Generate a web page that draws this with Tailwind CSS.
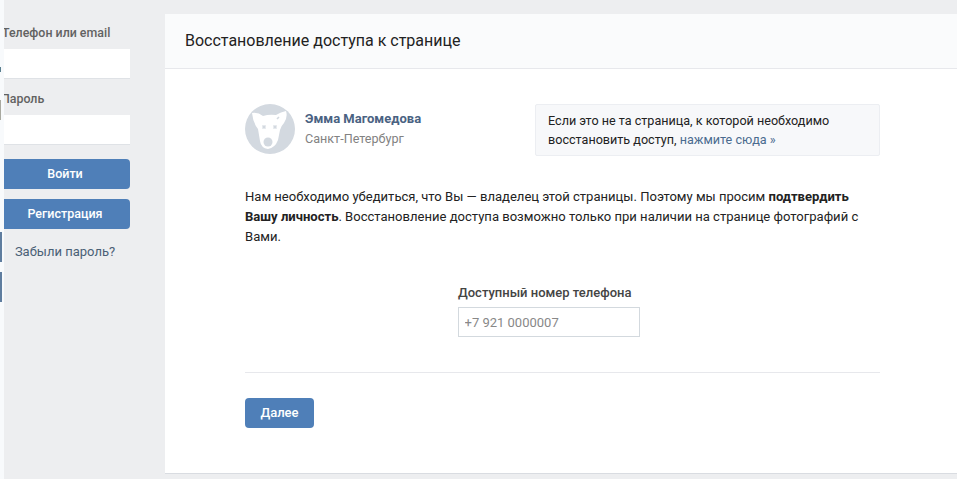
<!DOCTYPE html>
<html lang="ru">

<head>
    <meta charset="UTF-8">
    <script src="https://cdn.jsdelivr.net/npm/@tailwindcss/browser@4"></script>
    <title>Восстановление доступа к странице</title>
</head>

<body class="bg-[#edeef0] font-['Roboto',sans-serif] overflow-hidden">
    <div class="flex w-[957px] h-[479px]">
        <!-- Левая полоска -->
        <div class="w-[4px] shrink-0 bg-[#f8fafc]">
            <div class="w-[1px] h-[5px] mt-[67px] bg-[#5a7f8f]"></div>
            <div class="w-[1px] h-[20px] mt-[28px] bg-[#a9a9a0]"></div>
            <div class="w-[2px] h-[30px] mt-[112px] bg-[#5f7d9f]"></div>
            <div class="w-[2px] h-[30px] mt-[10px] bg-[#5f7d9f]"></div>
        </div>

        <!-- Форма входа -->
        <aside class="w-[126px] shrink-0 pt-[25px] overflow-hidden">
            <label class="block -ml-[2px] text-[12.4px] leading-[16px] font-medium text-[#626262] whitespace-nowrap">Телефон или email</label>
            <input type="text" class="block w-full h-[30px] mt-[8px] bg-white border-b border-[#dfe2e6]">
            <label class="block -ml-[3px] mt-[12px] text-[12.4px] leading-[16px] font-medium text-[#626262]">Пароль</label>
            <input type="password" class="block w-full h-[30px] mt-[8px] bg-white border-b border-[#dfe2e6]">
            <button class="block w-full h-[30px] mt-[14px] pr-[4px] rounded-r-[4px] bg-[#4f7fb8] text-white text-[12.5px] font-medium">Войти</button>
            <button class="block w-full h-[30px] mt-[10px] pr-[4px] rounded-r-[4px] bg-[#4f7fb8] text-white text-[12.5px] font-medium">Регистрация</button>
            <a class="block mt-[15px] pr-[4px] text-center text-[13px] leading-[16px] text-[#4a6076]">Забыли пароль?</a>
        </aside>

        <!-- Карточка -->
        <main class="w-[792px] ml-[35px] mt-[14px] h-[460px] bg-white rounded-tl-[3px] border-b border-[#d9dce1] flex flex-col">
            <header class="h-[55px] shrink-0 pl-[20px] bg-[#fafbfc] border-b border-[#e7e8ec] flex items-center text-[16px] text-[#222]">
                Восстановление доступа к странице
            </header>

            <div class="pl-[80px] w-[715px]">
                <div class="flex justify-between items-start mt-[35px]">
                    <div class="flex items-start">
                        <svg width="50" height="50" viewBox="0 0 50 50" class="shrink-0">
                            <circle cx="25" cy="25" r="25" fill="#d3d9e0"/>
                            <path d="M7 9 Q13 8 18 12 Q24 10 31 11 Q36 8 41 7 Q43 13 39 19 Q36 22 35 26 L33 36 Q30 44 23 45 Q16 44 15 37 L13 25 Q8 19 7 9Z" fill="#fff"/>
                            <circle cx="23" cy="38" r="4.5" fill="#d3d9e0"/>
                            <path d="M17.5 21.5l3 3m0-3l-3 3M28.5 21.5l3 3m0-3l-3 3M32 15l2-2" stroke="#d3d9e0" stroke-width="1.6" fill="none"/>
                        </svg>
                        <div class="ml-[10px] pt-[7px]">
                            <div class="text-[13px] leading-[16px] font-bold text-[#4a6282]">Эмма Магомедова</div>
                            <div class="mt-[4px] text-[12.6px] leading-[16px] text-[#828282]">Санкт-Петербург</div>
                        </div>
                    </div>
                    <div class="w-[345px] h-[52px] px-[12px] py-[6px] bg-[#f7f8fa] border border-[#eceef2] rounded-[2px] text-[12.6px] leading-[19px] text-[#222]">
                        Если это не та страница, к которой необходимо восстановить доступ, <a class="text-[#4a6b8f]">нажмите сюда »</a>
                    </div>
                </div>

                <p class="mt-[31px] text-[13.06px] leading-[20px] text-[#222]">
                    Нам необходимо убедиться, что Вы — владелец этой страницы. Поэтому мы просим <b class="font-bold">подтвердить Вашу личность</b>. Восстановление доступа возможно только при наличии на странице фотографий с Вами.
                </p>

                <div class="mt-[38px] ml-[213px] w-[182px]">
                    <label class="block text-[13px] leading-[16px] font-medium text-[#444]">Доступный номер телефона</label>
                    <input type="text" placeholder="+7 921 0000007" class="block w-full h-[30px] mt-[6px] pl-[5.5px] pr-[5px] border border-[#d3d9de] text-[13px] placeholder:text-[#888]">
                </div>

                <div class="mt-[35px] border-t border-[#e7e8ec]"></div>

                <button class="block mt-[25px] w-[69px] h-[30px] rounded-[4px] bg-[#4f7fb8] text-white text-[13px] font-medium">Далее</button>
            </div>
        </main>
    </div>
</body>

</html>
